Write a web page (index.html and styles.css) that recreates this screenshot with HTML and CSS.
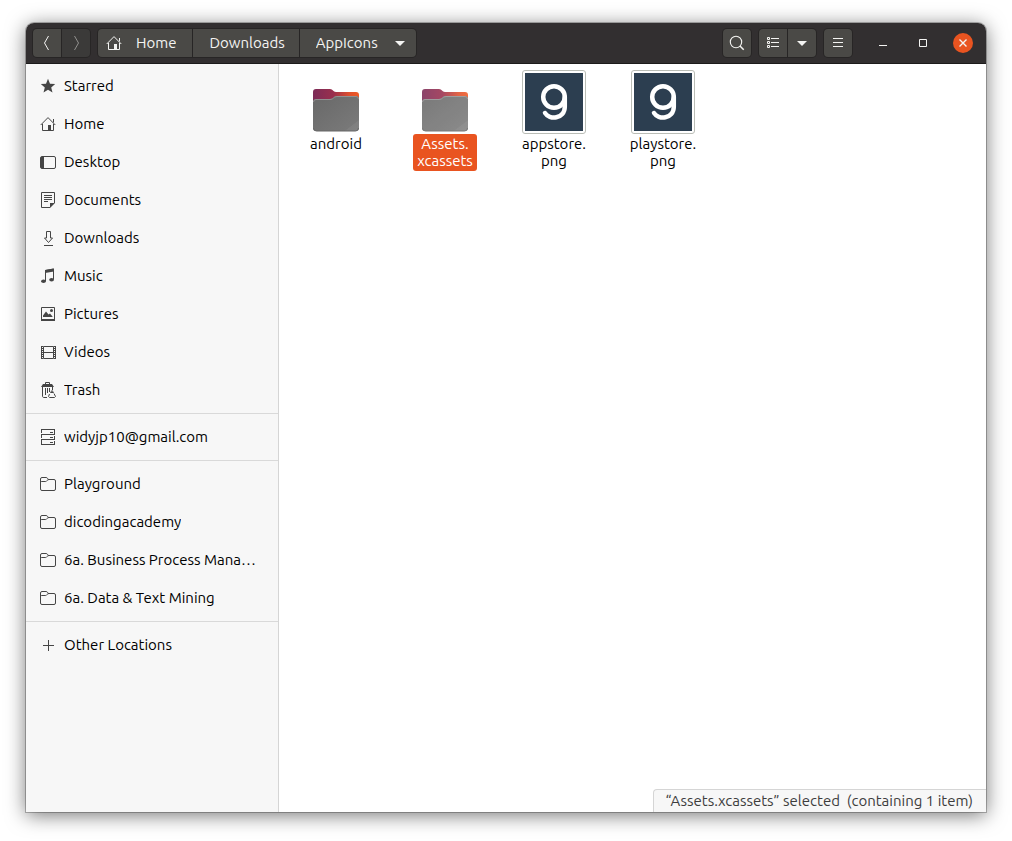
FILE: index.html
```html
<!DOCTYPE html>
<html lang="en">
<head>
<meta charset="utf-8">
<meta name="viewport" content="width=device-width, initial-scale=1">
<title>AppIcons</title>
<link rel="stylesheet" href="styles.css">
</head>
<body>
<svg class="defs" aria-hidden="true">
  <defs>
    <linearGradient id="folder-back" x1="0" y1="0" x2="1" y2="0">
      <stop offset="0" stop-color="#7c2b57"/><stop offset=".45" stop-color="#9a2f4d"/><stop offset=".8" stop-color="#e0502c"/><stop offset="1" stop-color="#f05a24"/>
    </linearGradient>
    <linearGradient id="folder-front" x1="0" y1="0" x2="1" y2="1">
      <stop offset="0" stop-color="#686868"/><stop offset=".84" stop-color="#787878"/><stop offset=".85" stop-color="#7f7f7f"/><stop offset="1" stop-color="#838383"/>
    </linearGradient>
    <symbol id="i-home" viewBox="0 0 16 16">
      <path d="M.7 9 8 1.600 15.300 9M2.500 8v6.500h11V8M13.500 3v3.500" fill="none" stroke="currentColor"/>
      <path d="M8 9h3v6H8z" fill="currentColor"/>
    </symbol>
    <symbol id="i-folder" viewBox="0 0 16 16">
      <path d="M.5 4V3A1.500 1.500 0 0 1 2 1.500h4.200c.8 0 1 .4 1.500 1.200.3.500.6.8 1.300.8h5A1.500 1.500 0 0 1 15.500 5v8a1.500 1.500 0 0 1-1.500 1.500H2A1.500 1.500 0 0 1 .5 13zM.5 6.500C.5 5.800 1 5.500 1.700 5.500h4C7 5.500 7 3.500 9 3.500" fill="none" stroke="currentColor"/>
    </symbol>
    <symbol id="folder" viewBox="0 0 64 64">
      <path d="M9 22a3 3 0 0 1 3-3h14c3 0 3 3 6 3h20a3 3 0 0 1 3 3v20H9z" fill="url(#folder-back)"/>
      <path d="M9 32a3 3 0 0 1 3-3h14c4 0 3-3 7-3h19a3 3 0 0 1 3 3v29a3 3 0 0 1-3 3H12a3 3 0 0 1-3-3z" fill="url(#folder-front)"/>
      <path d="M9.500 32a2.500 2.500 0 0 1 2.500-2.500h14c4 0 3-3 7-3h19a2.500 2.500 0 0 1 2.500 2.500" fill="none" stroke="#919191"/>
      <path d="M9.500 58a3 3 0 0 0 3 3h39a3 3 0 0 0 3-3" fill="none" stroke="#666"/>
    </symbol>
    <symbol id="logo-g" viewBox="0 0 58 58">
      <circle cx="29" cy="24" r="10.800" fill="none" stroke="#fff" stroke-width="4.500"/>
      <path d="M39.800 24v9.500c0 13-15.800 13.500-19.800 6.500" fill="none" stroke="#fff" stroke-width="4.500" stroke-linecap="round"/>
    </symbol>
  </defs>
</svg>

<div class="window">
  <header class="titlebar">
    <div class="group">
      <button class="tool" aria-label="Back"><svg class="icon" viewBox="0 0 16 16"><path d="M9.500 1 5.500 8l4 7" fill="none" stroke="currentColor"/></svg></button>
      <button class="tool" aria-label="Forward" disabled><svg class="icon" viewBox="0 0 16 16"><path d="M6.500 1l4 7-4 7" fill="none" stroke="currentColor"/></svg></button>
    </div>
    <nav class="group" aria-label="Path">
      <button class="crumb crumb-home"><svg class="icon"><use href="#i-home"/></svg><span class="label">Home</span></button>
      <button class="crumb"><span class="label">Downloads</span></button>
      <button class="crumb crumb-current"><span class="label">AppIcons</span><svg class="icon" viewBox="0 0 16 16"><path d="M3 6h10l-5 5z" fill="currentColor"/></svg></button>
    </nav>
    <div class="spacer"></div>
    <div class="group">
      <button class="tool" aria-label="Search"><svg class="icon" viewBox="0 0 16 16"><circle cx="7" cy="7" r="5.700" fill="none" stroke="currentColor" stroke-width="1.100"/><path d="m11 11 3.700 3.700" stroke="currentColor" stroke-width="1.500"/></svg></button>
    </div>
    <div class="group">
      <button class="tool" aria-label="List view"><svg class="icon" viewBox="0 0 16 16"><path d="M2.500 2.500h2v2h-2zM2.500 6.500h2v2h-2zM2.500 10.500h2v2h-2zM6 3.500h8M6 7.500h8M6 11.500h8" fill="none" stroke="currentColor"/></svg></button>
      <button class="tool" aria-label="View options"><svg class="icon" viewBox="0 0 16 16"><path d="M3 6h10l-5 5z" fill="currentColor"/></svg></button>
    </div>
    <div class="group">
      <button class="tool" aria-label="Menu"><svg class="icon" viewBox="0 0 16 16"><path d="M3 3.500h10M3 7.500h10M3 11.500h10" stroke="currentColor"/></svg></button>
    </div>
    <div class="controls">
      <button class="control" aria-label="Minimize"><svg class="icon" viewBox="0 0 16 16"><path d="M4 10.500h8" stroke="currentColor"/></svg></button>
      <button class="control" aria-label="Maximize"><svg class="icon" viewBox="0 0 16 16"><path d="M4.500 4.500h7v7h-7z" fill="none" stroke="currentColor"/></svg></button>
      <button class="control close" aria-label="Close"><svg class="icon" viewBox="0 0 16 16"><path d="m4.500 4.500 7 7m0-7-7 7" stroke="currentColor" stroke-width="1.400"/></svg></button>
    </div>
  </header>

  <div class="content">
    <nav class="sidebar" aria-label="Places">
      <a class="place" href="#starred"><svg class="icon" viewBox="0 0 16 16"><path d="m8 .8 2 5 5.200.3-4 3.400 1.300 5L8 11.700l-4.500 2.800 1.300-5-4-3.400L6 5.800z" fill="currentColor"/></svg><span class="label">Starred</span></a>
      <a class="place" href="#home"><svg class="icon"><use href="#i-home"/></svg><span class="label">Home</span></a>
      <a class="place" href="#desktop"><svg class="icon" viewBox="0 0 16 16"><rect x=".5" y="2.500" width="15" height="12" rx="1.500" fill="none" stroke="currentColor"/><path d="M1 3h3v11H1z" fill="currentColor"/></svg><span class="label">Desktop</span></a>
      <a class="place" href="#documents"><svg class="icon" viewBox="0 0 16 16"><path d="M10 15.500H1.500V.5h13V11M4 3.500h8M4 5.500h8M4 7.500h8M4 9.500h4" fill="none" stroke="currentColor"/><path d="M10 11h5l-5 5z" fill="currentColor"/></svg><span class="label">Documents</span></a>
      <a class="place" href="#downloads"><svg class="icon" viewBox="0 0 16 16"><path d="M6.500 1.500h4V8h2l-4 4.500-4-4.500h2zM4 15.500h9" fill="none" stroke="currentColor"/></svg><span class="label">Downloads</span></a>
      <a class="place" href="#music"><svg class="icon" viewBox="0 0 16 16"><path d="M5.500 13V2.500L13.500 1v10.500" fill="none" stroke="currentColor"/><path d="m5 2 9-1.500v3L5 5z" fill="currentColor"/><ellipse cx="3.500" cy="13.300" rx="2.400" ry="1.800" fill="currentColor"/><ellipse cx="11.600" cy="11.800" rx="2.400" ry="1.800" fill="currentColor"/></svg><span class="label">Music</span></a>
      <a class="place" href="#pictures"><svg class="icon" viewBox="0 0 16 16"><path d="M1.500 1.500h13v13h-13z" fill="none" stroke="currentColor"/><path d="M1 13h14v2H1zM3 11V9.500l3-4 2.500 3L10 7.500l2.500 3v.5z" fill="currentColor"/><circle cx="11.500" cy="4.500" r="1.500" fill="currentColor"/></svg><span class="label">Pictures</span></a>
      <a class="place" href="#videos"><svg class="icon" viewBox="0 0 16 16"><path d="M3.500 2.500h10v12h-10zM4 8.500h9" fill="none" stroke="currentColor"/><path d="M1.500 2v13M15.500 2v13" stroke="currentColor"/><path d="M2.500 2v13M14.500 2v13" stroke="currentColor" stroke-dasharray="1 1"/></svg><span class="label">Videos</span></a>
      <a class="place" href="#trash"><svg class="icon" viewBox="0 0 16 16"><path d="M5.500 2V.5h4V2M2.500 5v9c0 1 .5 1.500 1.500 1.500h3M5.500 6v7M7.500 6v5M9.500 6v4M12.500 5v3" fill="none" stroke="currentColor"/><path d="M3 2h9l2 3H1z" fill="currentColor"/><path d="m12 8.500 1.500 2h-3zM9.500 12l-1 2.500 1 1h5l1-1-1.500-3" fill="none" stroke="currentColor"/></svg><span class="label">Trash</span></a>
      <hr class="divider">
      <a class="place" href="#account"><svg class="icon" viewBox="0 0 16 16"><path d="M1 .5h14M1 5.500h14M1 10.500h14M1 15.500h14M1.500 1v3M14.500 1v4M1.500 6v3M14.500 7v3M1.500 11v5M14.500 12v4M10 3.500h3M10 8.500h3M10 13.500h3" fill="none" stroke="currentColor"/></svg><span class="label">widyjp10@gmail.com</span></a>
      <hr class="divider">
      <a class="place" href="#playground"><svg class="icon"><use href="#i-folder"/></svg><span class="label">Playground</span></a>
      <a class="place" href="#dicodingacademy"><svg class="icon"><use href="#i-folder"/></svg><span class="label">dicodingacademy</span></a>
      <a class="place" href="#business"><svg class="icon"><use href="#i-folder"/></svg><span class="label">6a. Business Process Mana…</span></a>
      <a class="place" href="#mining"><svg class="icon"><use href="#i-folder"/></svg><span class="label">6a. Data &amp; Text Mining</span></a>
      <hr class="divider">
      <a class="place" href="#other"><svg class="icon" viewBox="0 0 16 16"><path d="M3 8.500h11M8.500 3v11" stroke="currentColor"/></svg><span class="label">Other Locations</span></a>
    </nav>

    <main class="files">
      <div class="grid">
        <a class="file" href="#android"><svg class="thumb"><use href="#folder"/></svg><span class="name">android</span></a>
        <a class="file selected" href="#assets" aria-current="true"><svg class="thumb"><use href="#folder"/></svg><span class="name">Assets.<br>xcassets</span></a>
        <a class="file" href="#appstore"><span class="thumb preview"><svg class="art"><use href="#logo-g"/></svg></span><span class="name">appstore.<br>png</span></a>
        <a class="file" href="#playstore"><span class="thumb preview"><svg class="art"><use href="#logo-g"/></svg></span><span class="name">playstore.<br>png</span></a>
      </div>
      <div class="status" role="status">“Assets.xcassets” selected&nbsp; (containing 1 item)</div>
    </main>
  </div>
</div>
</body>
</html>
```
FILE: styles.css
```css
* { box-sizing: border-box; }

body {
  margin: 0;
  min-height: 100vh;
  padding: 23px 26px 29px;
  display: flex;
  background: #fff;
  color: #000;
  font: 15px/17px Ubuntu, "Noto Sans", sans-serif;
}

.defs { position: absolute; width: 0; height: 0; }

.icon { display: block; flex: none; width: 16px; height: 16px; }

.label {
  padding-bottom: 2px;
  overflow: hidden;
  white-space: nowrap;
  text-overflow: ellipsis;
}

button { margin: 0; padding: 0; border: 0; background: none; color: inherit; font: inherit; }

a { color: inherit; text-decoration: none; }

.window {
  flex: 1;
  min-width: 0;
  display: flex;
  flex-direction: column;
  border-radius: 8px 8px 0 0;
  background: #fff;
  box-shadow: 0 0 0 1px rgba(0, 0, 0, .25), 0 3px 20px rgba(0, 0, 0, .55);
}

/* Title bar */

.titlebar {
  display: flex;
  align-items: center;
  gap: 6px;
  height: 41px;
  padding: 0 13px 0 6px;
  border-bottom: 1px solid #1c1b1b;
  border-radius: 8px 8px 0 0;
  background: #322f30;
  color: #f4f4f2;
}

.group {
  display: flex;
  gap: 1px;
  padding: 1px;
  border-radius: 5px;
  background: #272525;
}

.tool,
.crumb {
  display: flex;
  align-items: center;
  height: 28px;
  background: #4a4946;
}

.tool { justify-content: center; width: 28px; }

.tool:disabled { background: #3b3a39; color: #92918f; }

.group > :first-child { border-top-left-radius: 4px; border-bottom-left-radius: 4px; }

.group > :last-child { border-top-right-radius: 4px; border-bottom-right-radius: 4px; }

.crumb { padding: 0 14px 0 16px; }

.crumb-home { gap: 14px; padding: 0 16px 0 8px; }

.crumb-current { gap: 14px; padding-right: 8px; }

.spacer { flex: 1; }

.controls { display: flex; gap: 20px; padding-left: 14px; }

.control {
  display: grid;
  place-items: center;
  width: 20px;
  height: 20px;
  border-radius: 50%;
}

.close { background: #e95420; }

/* Sidebar */

.content { flex: 1; display: flex; min-height: 0; }

.sidebar {
  flex: none;
  width: 253px;
  padding: 3px 0;
  border-right: 1px solid #d5d5d5;
  background: #f7f7f7;
}

.place {
  display: flex;
  align-items: center;
  gap: 8px;
  height: 38px;
  padding: 0 14px;
}

.place .icon { color: #454545; }

.divider { height: 1px; margin: 4px 0; border: 0; background: #d9d9d9; }

/* Files */

.files {
  flex: 1;
  min-width: 0;
  display: flex;
  flex-direction: column;
  justify-content: space-between;
}

.grid {
  display: grid;
  grid-template-columns: repeat(auto-fill, 108px);
  gap: 12px 1px;
  padding: 6px 3px;
}

.file { display: flex; flex-direction: column; align-items: center; text-align: center; }

.thumb { display: block; width: 64px; height: 64px; }

.preview {
  padding: 2px;
  border: 1px solid #babdb6;
  border-radius: 3px;
  background: #fff;
}

.art { display: block; width: 58px; height: 58px; background: #2c3e50; }

.name { padding: 1px 4px 2px; border-radius: 3px; }

.selected .thumb { opacity: .88; }

.selected .name { background: #e95420; color: #fff; }

.status {
  align-self: flex-end;
  padding: 2px 13px 3px 12px;
  border: 1px solid #d5d5d5;
  border-width: 1px 0 0 1px;
  border-radius: 4px 0 0 0;
  background: #f7f7f7;
  color: #3d3d3d;
}
```
